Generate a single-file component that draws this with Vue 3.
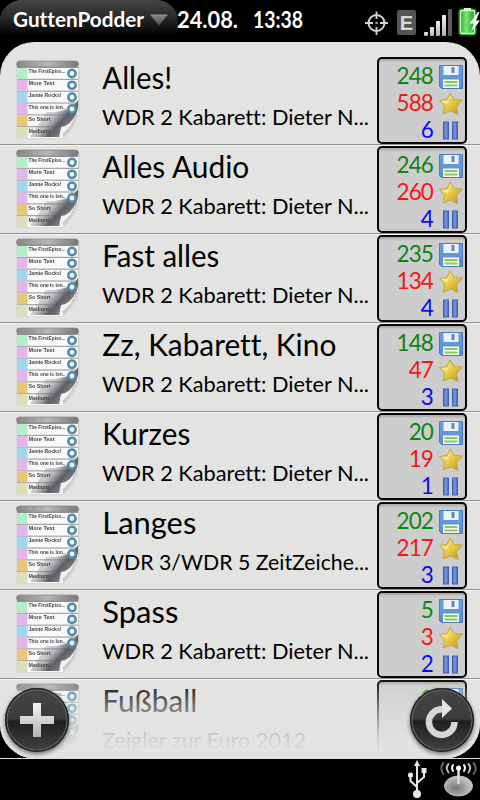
<script setup>
const rows = [
  { title: 'Alles!', w: 70, sub: 'WDR 2 Kabarett: Dieter N...', sw: 267, counts: [248, 588, 6] },
  { title: 'Alles Audio', w: 147, sub: 'WDR 2 Kabarett: Dieter N...', sw: 267, counts: [246, 260, 4] },
  { title: 'Fast alles', w: 117, sub: 'WDR 2 Kabarett: Dieter N...', sw: 267, counts: [235, 134, 4] },
  { title: 'Zz, Kabarett, Kino', w: 234, sub: 'WDR 2 Kabarett: Dieter N...', sw: 267, counts: [148, 47, 3] },
  { title: 'Kurzes', w: 88, sub: 'WDR 2 Kabarett: Dieter N...', sw: 267, counts: [20, 19, 1] },
  { title: 'Langes', w: 94, sub: 'WDR 3/WDR 5 ZeitZeiche...', sw: 267, counts: [202, 217, 3] },
  { title: 'Spass', w: 76, sub: 'WDR 2 Kabarett: Dieter N...', sw: 267, counts: [5, 3, 2] },
  { title: 'Fußball', w: 95, sub: 'Zeigler zur Euro 2012', sw: 204, counts: [2, 58] },
]
const strips = [
  { text: 'The FirstEpiso...', w: 37, color: '#b3efc6', ring: true },
  { text: 'More Text', w: 26, color: '#e4b5ee', ring: true },
  { text: 'Jamie Rocks!', w: 33, color: '#a3d6f5', ring: true },
  { text: 'This one is lon..', w: 37, color: '#e3b7ee', ring: true },
  { text: 'So Short', w: 22, color: '#eac679' },
  { text: 'Medium!', w: 22, color: '#dcdfba' },
]
</script>

<template>
  <div class="phone">
    <svg class="defs" width="0" height="0" aria-hidden="true">
      <defs>
        <linearGradient id="bar" x1="0" x2="1" y1="0" y2="0">
          <stop offset="0" stop-color="#858585" /><stop offset=".5" stop-color="#b7b7b5" /><stop offset="1" stop-color="#777" />
        </linearGradient>
        <linearGradient id="curl" gradientUnits="userSpaceOnUse" x1="26" y1="42" x2="54" y2="68">
          <stop offset="0" stop-color="#777" stop-opacity="0" /><stop offset=".45" stop-color="#85858d" stop-opacity=".45" /><stop offset=".72" stop-color="#55555f" stop-opacity=".95" /><stop offset="1" stop-color="#888" />
        </linearGradient>
        <linearGradient id="disk" x1="0" y1="0" x2="0" y2="1">
          <stop offset="0" stop-color="#6ba0df" /><stop offset="1" stop-color="#5a8ed0" />
        </linearGradient>
        <linearGradient id="star" x1="0" y1="0" x2="1" y2="1">
          <stop offset="0" stop-color="#fff29b" /><stop offset=".5" stop-color="#e6ca48" /><stop offset="1" stop-color="#b98e12" />
        </linearGradient>
        <linearGradient id="pause" x1="0" y1="0" x2="1" y2="0">
          <stop offset="0" stop-color="#4668bc" /><stop offset=".5" stop-color="#7d9ae0" /><stop offset="1" stop-color="#3b5cb4" />
        </linearGradient>
        <linearGradient id="silver" x1="0" y1="0" x2="0" y2="1">
          <stop offset="0" stop-color="#f4f4f4" /><stop offset="1" stop-color="#b2b2b2" />
        </linearGradient>
        <linearGradient id="tri" x1="0" y1="0" x2="0" y2="1">
          <stop offset="0" stop-color="#858585" /><stop offset="1" stop-color="#4c4c4c" />
        </linearGradient>
        <linearGradient id="batt" x1="0" y1="0" x2="1" y2="0">
          <stop offset="0" stop-color="#23b21e" /><stop offset=".4" stop-color="#7de874" /><stop offset="1" stop-color="#16a414" />
        </linearGradient>
        <radialGradient id="dish" cx=".4" cy=".6" r=".75">
          <stop offset="0" stop-color="#777" /><stop offset="1" stop-color="#ddd" />
        </radialGradient>
        <filter id="soft"><feGaussianBlur stdDeviation=".45" /></filter>
        <filter id="glow" x="-30%" y="-30%" width="160%" height="160%"><feGaussianBlur stdDeviation="1.3" /></filter>
      </defs>
    </svg>

    <header class="status">
      <div class="menu">
        <svg width="178" height="36" viewBox="0 0 178 36">
          <text class="bold" x="13" y="26.5" font-size="21" textLength="131" lengthAdjust="spacingAndGlyphs">GuttenPodder</text>
          <path d="M150.500 15H167.500L159 25.500Z" fill="url(#tri)" />
          <path d="M150.500 15H167.500" stroke="#999" />
        </svg>
      </div>
      <svg class="clock" width="130" height="42" viewBox="0 0 130 42">
        <text class="bold" x="-1" y="28" font-size="22.500" textLength="61" lengthAdjust="spacingAndGlyphs">24.08.</text>
        <text class="bold" x="75" y="28" font-size="22.500" textLength="50" lengthAdjust="spacingAndGlyphs">13:38</text>
      </svg>
      <svg class="tray" width="116" height="42" viewBox="364 0 116 42">
        <g fill="none" stroke="#d5d5d5">
          <circle cx="376.500" cy="23" r="8" stroke-width="2" />
          <path d="M376.500 11.500V19M376.500 27V35M365 23H373M380 23H388" stroke-width="1.800" />
          <circle cx="376.500" cy="23" r="1.300" stroke="none" fill="#aaa" />
        </g>
        <rect x="397" y="10" width="19" height="25" rx="2" fill="#555" />
        <text x="406.500" y="30" text-anchor="middle" class="edge">E</text>
        <g fill="url(#silver)">
          <rect x="424" y="32" width="4" height="4" rx="1" /><rect x="430" y="27" width="4" height="9" rx="1" />
          <rect x="436" y="21" width="4" height="15" rx="1" /><rect x="442" y="15" width="4" height="21" rx="1" />
        </g>
        <rect x="448" y="9" width="4" height="27" rx="1" fill="#5c5c5c" />
        <rect x="459" y="9" width="17" height="26" rx="2" fill="#35d02d" filter="url(#glow)" />
        <rect x="464" y="8" width="7" height="3" fill="#d9f5d6" />
        <rect x="460.500" y="10.500" width="14" height="23" rx="1" fill="url(#batt)" stroke="#d4f6d0" stroke-width="1.300" />
        <path d="M478 12L469.500 23.500H474L471 32L480 20.500H476L479.500 12Z" fill="#fff" />
      </svg>
    </header>

    <main class="scene">
      <div v-for="(row, i) in rows" :key="i" class="row">
        <svg class="thumb" width="64" height="80" viewBox="0 0 64 80">
          <path d="M1 5H63V48Q61 65 47 78H1Z" fill="#999" opacity=".4" filter="url(#glow)" />
          <path d="M1 6H62V48Q60 61 43 77H1Z" fill="#969696" />
          <g v-for="(s, n) in strips" :key="n" :transform="`translate(1 ${8 + n * 11.85})`">
            <rect :width="n < 4 ? 61 : n === 4 ? 54 : 46" height="10.800" fill="#fafafa" />
            <rect width="10.500" height="10.800" :fill="s.color" />
          </g>
          <path d="M62 40V48Q60 63 43 77H14Q22 66 30 52Q54 53 62 40Z" fill="url(#curl)" filter="url(#soft)" />
          <path d="M43 77L45 67Q55 66 61 52Q58 65 43 77Z" fill="#f2f2f2" />
          <g filter="url(#soft)">
            <template v-for="(s, n) in strips" :key="n">
              <text x="12.500" :y="13.3 + n * 11.85" class="tiny" :textLength="s.w" lengthAdjust="spacingAndGlyphs">{{ s.text }}</text>
              <circle v-if="s.ring" cx="56" :cy="13.5 + n * 11.85" r="3.700" fill="#e8f4f8" stroke="#588aa4" stroke-width="2.500" />
            </template>
          </g>
          <rect x=".5" y="1" width="62" height="6" rx="3" fill="url(#bar)" stroke="#868686" stroke-width=".7" />
        </svg>
        <svg class="label" width="275" height="87" viewBox="0 0 275 87">
          <text x="1.300" y="31.500" font-size="30" :textLength="row.w" lengthAdjust="spacingAndGlyphs">{{ row.title }}</text>
          <text x="1" y="68" font-size="22" :textLength="row.sw" lengthAdjust="spacingAndGlyphs">{{ row.sub }}</text>
        </svg>
        <div class="counts">
          <div class="count green">
            <span>{{ row.counts[0] }}</span>
            <svg width="26" height="27" viewBox="0 0 26 27">
              <path d="M1.500 2.500H24.500V25.500H3.500L1.500 23.500Z" fill="url(#disk)" stroke="#4a7dbf" />
              <path d="M5.500 3H20.500V12H5.500Z" fill="#edf3fb" /><rect x="13.500" y="4" width="3" height="6" fill="#5b87c4" />
              <path d="M5 16.500H21V25H5Z" fill="#f4faee" /><path d="M6.500 19H19.500M6.500 22.500H19.500" stroke="#87c96a" stroke-width="2" />
            </svg>
          </div>
          <div class="count red">
            <span>{{ row.counts[1] }}</span>
            <svg width="26" height="27" viewBox="0 0 26 27">
              <path d="M12 3L16 9.500L24.500 10L18.500 16.500L20 24.500L12.500 21L5 24L6.500 16L1.500 10.500L9 9.500Z" fill="url(#star)" stroke="#c4a63c" stroke-width="1" stroke-linejoin="round" />
              <path d="M12 5L10 11L4 11.500L10 14" fill="#fff8b0" opacity=".6" />
            </svg>
          </div>
          <div v-if="row.counts.length > 2" class="count blue">
            <span>{{ row.counts[2] }}</span>
            <svg width="26" height="27" viewBox="0 0 26 27">
              <rect x="5.500" y="5" width="5" height="17" fill="url(#pause)" stroke="#4162b4" /><rect x="14.500" y="5" width="5" height="17" fill="url(#pause)" stroke="#4162b4" />
            </svg>
          </div>
        </div>
      </div>
      <div class="fade"></div>
      <button class="round add">
        <svg width="64" height="64" viewBox="0 0 64 64"><path d="M28 15H36V28H49V36H36V49H28V36H15V28H28Z" fill="url(#silver)" /></svg>
      </button>
      <button class="round reload">
        <svg width="64" height="64" viewBox="0 0 64 64">
          <path d="M33 21.300H31.500A12.800 12.800 0 1 0 44.500 34" fill="none" stroke="#d6d6d6" stroke-width="6.500" />
          <path d="M32 11L42 20.500L32 30Z" fill="#e4e4e4" />
        </svg>
      </button>
    </main>

    <footer class="dock">
      <svg width="72" height="41" viewBox="406 759 72 41">
        <g fill="none" stroke="#e8e8e8" stroke-width="2">
          <path d="M417 763V793M417 787L410.500 781V775M417 783L424 777V770" />
        </g>
        <g fill="#e8e8e8"><path d="M417 760L420 766H414Z" /><circle cx="417" cy="794" r="4" /><circle cx="410.500" cy="775" r="2.600" /><rect x="421.500" y="768" width="5" height="5" /></g>
        <ellipse cx="458.500" cy="786" rx="14" ry="10" fill="url(#dish)" stroke="#bbb" />
        <path d="M458.500 768V784" stroke="#ddd" stroke-width="2.500" /><circle cx="458.500" cy="768" r="2.500" fill="#fff" />
        <g fill="none" stroke-width="2" stroke-linecap="round">
          <path d="M453 765Q451 768 453 771M464 765Q466 768 464 771" stroke="#f5f5f5" />
          <path d="M448.500 764Q445 768 448.500 772.500M468.500 764Q472 768 468.500 772.500" stroke="#bbb" />
          <path d="M443.500 763Q439 768 443.500 774M473.500 763Q478 768 473.500 774" stroke="#666" />
        </g>
      </svg>
    </footer>
  </div>
</template>

<style>
body { background: #000; overflow: hidden; }
</style>

<style scoped>
.phone { width: 480px; height: 800px; background: #000; display: flex; flex-direction: column; overflow: hidden; font-family: Lato, sans-serif; }
.defs { position: absolute; }
svg { display: block; flex: none; overflow: visible; }
text { font-family: Lato, sans-serif; font-variant-ligatures: none; }
.status { height: 42px; flex: none; display: flex; }
.menu { width: 178px; height: 38px; border-radius: 22px 22px 0 0; background: linear-gradient(#464646, #292929 45%, #000 95%); box-shadow: inset 0 1px #444; }
.bold { font-weight: 700; fill: #fff; }
.clock { margin-right: auto; }
.edge { font: 700 20px "Liberation Sans", sans-serif; fill: #d8d8d8; }
.tiny { font: 700 5px "Liberation Sans", sans-serif; fill: #444; }
.scene { position: relative; height: 716px; flex: none; box-sizing: border-box; padding-top: 14px; background: #e3e3e1; border-radius: 34px; overflow: hidden; }
.row { height: 89px; box-sizing: border-box; border-top: 1px solid #f4f4f2; border-bottom: 1px solid #929290; display: flex; }
.row:first-child { border-top-color: #e3e3e1; }
.thumb { margin: 3px 0 0 16px; }
.label { margin-left: 21px; }
.label text { fill: #000; }
.counts { width: 90px; height: 87px; margin-left: 1px; box-sizing: border-box; border: 2px solid #080808; border-radius: 5px; background: #cdcdcd; box-shadow: inset 0 3px 2px -1px #aaa; padding: 3px 1px 0 0; }
.count { height: 27px; display: flex; justify-content: flex-end; align-items: center; gap: 5px; font: 22.5px/27px Lato, sans-serif; letter-spacing: -0.9px; }
.count svg { margin-top: 1px; }
.green { color: #108410; }
.red { color: #f51515; }
.blue { color: #0b0bee; }
.fade { position: absolute; left: 0; right: 0; bottom: 0; height: 80px; background: linear-gradient(rgba(227, 227, 225, 0), rgba(227, 227, 225, .5) 35%, rgba(227, 227, 225, .88) 70%, #e3e3e1 95%); }
.round { position: absolute; bottom: 6px; width: 64px; height: 64px; padding: 0; border: 0; border-radius: 50%; background: linear-gradient(#454545, #3b3b3b 48%, #1f1f1f 52%, #424242); box-shadow: inset 0 0 0 1.5px #222, inset 0 0 0 2.500px #666, 0 2px 4px rgba(0, 0, 0, .55); }
.add { left: 5px; }
.reload { right: 6px; }
.dock { height: 42px; flex: none; box-sizing: border-box; border-top: 1px solid #ddd; display: flex; justify-content: flex-end; padding-right: 2px; }
</style>
